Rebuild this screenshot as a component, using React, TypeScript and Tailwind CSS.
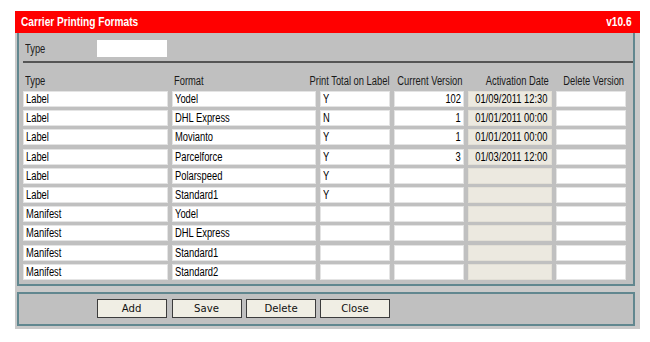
import React from "react";

interface Row {
  type: string;
  format: string;
  printTotal: string;
  version: string;
  activated: string;
}

const rows: Row[] = [
  { type: "Label", format: "Yodel", printTotal: "Y", version: "102", activated: "01/09/2011 12:30" },
  { type: "Label", format: "DHL Express", printTotal: "N", version: "1", activated: "01/01/2011 00:00" },
  { type: "Label", format: "Movianto", printTotal: "Y", version: "1", activated: "01/01/2011 00:00" },
  { type: "Label", format: "Parcelforce", printTotal: "Y", version: "3", activated: "01/03/2011 12:00" },
  { type: "Label", format: "Polarspeed", printTotal: "Y", version: "", activated: "" },
  { type: "Label", format: "Standard1", printTotal: "Y", version: "", activated: "" },
  { type: "Manifest", format: "Yodel", printTotal: "", version: "", activated: "" },
  { type: "Manifest", format: "DHL Express", printTotal: "", version: "", activated: "" },
  { type: "Manifest", format: "Standard1", printTotal: "", version: "", activated: "" },
  { type: "Manifest", format: "Standard2", printTotal: "", version: "", activated: "" },
];

// the screen uses a narrow sans; squeeze Liberation Sans to match
const L = ({ children }: { children: React.ReactNode }) => (
  <span className="inline-block whitespace-nowrap origin-left scale-x-[0.78]">{children}</span>
);
const R = ({ children }: { children: React.ReactNode }) => (
  <span className="inline-block whitespace-nowrap origin-right scale-x-[0.78]">{children}</span>
);

const cell = "h-[16px] bg-white border border-[#e4e4e4] flex items-center leading-[14px] whitespace-nowrap";

const Button = ({ label }: { label: string }) => (
  <button className="w-[70px] h-[19px] bg-[#f0eee4] border border-[#3c3c3c] text-[11px] text-[#111] leading-none [font-family:'DejaVu_Sans',sans-serif]">
    <span className="inline-block scale-x-[0.92]">{label}</span>
  </button>
);

export default function App() {
  return (
    <div className="w-[650px] h-[342px] bg-white pt-[11px] pl-[15px] text-[12px] text-black [font-family:'Liberation_Sans',Arial,sans-serif]">
      <div className="w-[625px] h-[318px] bg-[#c9c9c9] flex flex-col">
        <div className="h-[22px] bg-[#ff0000] flex items-center justify-between pl-[6px] pr-[8px] text-white font-bold text-[13px]">
          <L>Carrier Printing Formats</L>
          <R>v10.6</R>
        </div>

        <div className="ml-[2px] w-[618px] h-[253px] bg-[#c0c0c0] border-x-2 border-b-2 border-[#61878f] flex flex-col">
          <div className="flex items-center h-[17px] mt-[7px] pl-[6px] text-[#202020]">
            <div className="w-[72px]">
              <L>Type</L>
            </div>
            <div className="w-[70px] h-[17px] bg-white" />
          </div>
          <div className="mt-[4px] ml-[4px] h-[2px] bg-[#555555]" />

          <div className="h-[28px] flex items-end pb-[3px] pl-[4px] gap-[4px] text-[#1a1a1a] leading-[14px]">
            <div className="w-[145px] pl-[2px]">
              <L>Type</L>
            </div>
            <div className="w-[144px] pl-[2px]">
              <L>Format</L>
            </div>
            <div className="w-[70px] flex justify-end">
              <R>Print Total on Label</R>
            </div>
            <div className="w-[70px] flex justify-end pr-[2px]">
              <R>Current Version</R>
            </div>
            <div className="w-[84px] flex justify-end pr-[3px]">
              <R>Activation Date</R>
            </div>
            <div className="w-[70px] flex justify-end pr-[2px]">
              <R>Delete Version</R>
            </div>
          </div>

          <div className="flex flex-col pl-[4px]">
            {rows.map((r, i) => (
              <div key={i} className="h-[19.2px] flex gap-[4px]">
                <div className={`${cell} w-[145px] pl-[2px]`}>
                  <L>{r.type}</L>
                </div>
                <div className={`${cell} w-[144px] pl-[2px]`}>
                  <L>{r.format}</L>
                </div>
                <div className={`${cell} w-[70px] pl-[2px]`}>
                  <L>{r.printTotal}</L>
                </div>
                <div className={`${cell} w-[70px] justify-end pr-[2px]`}>
                  <R>{r.version}</R>
                </div>
                <div className="h-[16px] w-[84px] bg-[#ece9e0] border border-[#e2dfd6] flex items-center justify-end pr-[3px] leading-[14px] whitespace-nowrap">
                  <R>{r.activated}</R>
                </div>
                <div className={`${cell} w-[70px]`} />
              </div>
            ))}
          </div>
        </div>

        <div className="mt-[6px] ml-[2px] w-[618px] h-[34px] bg-[#c0c0c0] border-2 border-[#61878f] flex items-start pt-[5px] pl-[78px]">
          <Button label="Add" />
          <div className="w-[5px]" />
          <Button label="Save" />
          <div className="w-[4px]" />
          <Button label="Delete" />
          <div className="w-[4px]" />
          <Button label="Close" />
        </div>
      </div>
    </div>
  );
}
